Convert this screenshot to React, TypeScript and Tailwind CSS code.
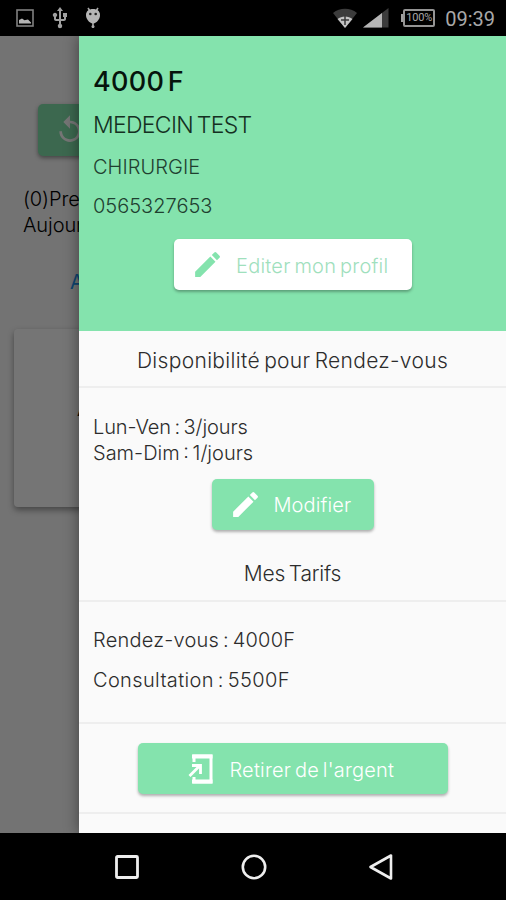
import { ReactNode } from 'react';
import clsx from 'clsx';
import { MdEdit, MdReplay, MdUsb } from 'react-icons/md';

interface ActionButtonProps {
  icon: ReactNode;
  label: string;
  className: string;
  labelClassName: string;
}

function ActionButton({ icon, label, className, labelClassName }: ActionButtonProps) {
  return (
    <button
      className={clsx(
        'flex h-[51px] items-center rounded-[5px] shadow-[0_2px_3px_rgba(0,0,0,0.3)]',
        className
      )}
    >
      {icon}
      <span className={clsx('whitespace-nowrap leading-none [word-spacing:-2px]', labelClassName)}>{label}</span>
    </button>
  );
}

function WithdrawIcon() {
  return (
    <svg className="h-[32px] w-[26px]" viewBox="0 0 26 32" fill="none" stroke="#fff">
      <path d="M6 9V3h17v26H6v-5" strokeWidth="3" />
      <path d="M4 1.500h20.500v4H4zM4 26.500h20.500v4H4z" fill="#fff" stroke="none" />
      <path d="M1.500 23L12 12.500M4 12.500h8.500V21" strokeWidth="2.800" />
    </svg>
  );
}

function StatusBar() {
  return (
    <div className="flex h-9 items-center justify-between bg-black pl-4 pr-[11px] text-[#a8a8a8]">
      <div className="flex items-center">
        <svg className="h-[18px] w-[18px]" viewBox="0 0 18 18">
          <rect x="1" y="1" width="16" height="16" fill="none" stroke="#808080" strokeWidth="1.6" />
          <path d="M3 14.5V11l3-1.6 2.5 1.8 3.5-.6 3 3v.9z" fill="#b5b5b5" />
        </svg>
        <MdUsb className="ml-[14px] h-[24px] w-[24px] text-[#a0a0a0]" />
        <svg className="ml-[13px] h-[24px] w-[16px]" viewBox="0 0 16 24">
          <path d="M3 2l2 3M13 2l-2 3M8 17v5" stroke="#a8a8a8" strokeWidth="1.6" />
          <path d="M1 9c0-4 3-6 7-6s7 2 7 6-3 8-7 8.500C4 17 1 13 1 9z" fill="#b5b5b5" />
          <circle cx="5.300" cy="8" r="1.300" fill="#222" />
          <circle cx="10.700" cy="8" r="1.300" fill="#222" />
          <circle cx="8" cy="20.500" r="1.500" fill="#a8a8a8" />
        </svg>
      </div>
      <div className="flex items-center">
        <svg className="h-[22px] w-[24px]" viewBox="0 0 24 22">
          <path d="M0 6C7 .4 17 .4 24 6L12 21z" fill="#3c3c3c" />
          <path d="M4.500 12c4-3.500 11-3.500 15 0L12 21z" fill="#c4c4c4" />
          <path d="M12 8.500V18M8 13h8" stroke="#3a3a3a" strokeWidth="1.500" />
        </svg>
        <svg className="ml-[6px] h-[20px] w-[26px]" viewBox="0 0 26 20">
          <path d="M25.500 0v19.500H0z" fill="#3c3c3c" />
          <path d="M19 5v14.500H0z" fill="#b5b5b5" />
        </svg>
        <div className="ml-[12px] flex items-center">
          <div className="h-2 w-[2px] bg-[#a0a0a0]" />
          <div className="flex h-[18px] w-[32px] items-center justify-center rounded-[2px] border-2 border-[#949494] font-['Roboto'] text-[11px] tracking-[-0.2px]">
            100%
          </div>
        </div>
        <span className="ml-[10px] mt-[2px] font-['Roboto'] text-[20px] leading-none">09:39</span>
      </div>
    </div>
  );
}

// Only the strip left of the drawer stays visible
function HomeScreen() {
  return (
    <div className="h-full w-[79px] overflow-hidden pt-[68px] text-[20px] font-light text-black">
      <div className="ml-[38px] flex h-[52px] w-[200px] items-center rounded-[5px] bg-[#84e3ad] pl-[16px] shadow-[0_2px_4px_rgba(0,0,0,0.4)]">
        <MdReplay className="h-[32px] w-[32px] text-white" />
      </div>
      <p className="ml-[23px] mt-[30px] whitespace-nowrap leading-[26px] tracking-[-0.1px]">
        (0)Pre
        <br />
        Aujour
      </p>
      <p className="ml-[70px] mt-[31px] font-normal leading-[26px] text-[#2196f3]">A</p>
      <div className="ml-[14px] mt-[34px] h-[178px] w-[470px] rounded-[4px] bg-white pl-[63px] pt-[68px] shadow-[0_3px_6px_rgba(0,0,0,0.4)]">
        <p className="text-[20px] font-medium leading-6">A</p>
      </div>
    </div>
  );
}

function ProfileDrawer() {
  return (
    <aside className="absolute inset-y-0 left-[79px] right-0 flex flex-col bg-[#fafafa] font-light text-[#2c2c2c] shadow-[0_0_14px_rgba(0,0,0,0.45)] [word-spacing:-2px]">
      <header className="flex h-[295px] flex-col bg-[#84e3ad] pl-[14px] pt-[28px]">
        <h1 className="mt-px text-[27px] font-medium leading-[34px] tracking-[0.3px] text-[#06140c] [word-spacing:-4px]">4000 F</h1>
        <p className="mt-[9px] text-[23px] leading-[34px] tracking-[-0.7px] text-[#143022] [word-spacing:-2px]">MEDECIN TEST</p>
        <p className="mt-[10px] text-[20px] leading-[30px] tracking-[0.05px] text-[#1f4030]">CHIRURGIE</p>
        <p className="mt-[9px] text-[20px] leading-[30px] text-[#1f4030]">0565327653</p>
        <ActionButton
          icon={<MdEdit className="h-[33px] w-[33px] text-[#84e3ad]" />}
          label="Editer mon profil"
          className="ml-[81px] mt-[18px] w-[238px] bg-white pl-[17px]"
          labelClassName="ml-[12px] mt-[2px] text-[20px] tracking-[0.23px] text-[#9fe0bd]"
        />
      </header>

      <h2 className="border-b-2 border-[#eeeeee] pb-[10px] pt-[15px] text-center text-[21px] leading-[30px] tracking-[0.32px]">
        Disponibilité pour Rendez-vous
      </h2>
      <div className="pl-[14px] pt-[26px] text-[20px] leading-[26px]">
        <p className="tracking-[-0.1px]">Lun-Ven : 3/jours</p>
        <p>Sam-Dim : 1/jours</p>
      </div>
      <ActionButton
        icon={<MdEdit className="h-[33px] w-[33px] text-white" />}
        label="Modifier"
        className="mt-[13px] w-[162px] self-center bg-[#84e3ad] pl-[17px]"
        labelClassName="ml-[12px] mt-[1px] text-[20px] tracking-[0.1px] text-white"
      />

      <h2 className="mt-[29px] border-b-2 border-[#eeeeee] pb-[11px] text-center text-[21px] leading-[30px] tracking-[-0.2px]">
        Mes Tarifs
      </h2>
      <div className="h-[122px] border-b-2 border-[#eeeeee] pl-[14px] pt-[24px] text-[20px]">
        <p className="leading-[28px] tracking-[0.22px]">Rendez-vous : 4000F</p>
        <p className="mt-[12px] leading-[28px] tracking-[0.35px]">Consultation : 5500F</p>
      </div>

      <div className="flex h-[90px] justify-center border-b-2 border-[#eeeeee] pt-[19px]">
        <ActionButton
          icon={<WithdrawIcon />}
          label="Retirer de l'argent"
          className="w-[310px] bg-[#84e3ad] pl-[50px]"
          labelClassName="ml-[16px] mt-[2px] text-[20px] tracking-[0.2px] text-white"
        />
      </div>
    </aside>
  );
}

function NavigationBar() {
  return (
    <div className="flex h-[67px] items-center justify-center gap-[101px] bg-black pl-[2px]">
      <svg className="h-[26px] w-[26px]" viewBox="0 0 26 26" fill="none" stroke="#eee" strokeWidth="2.800">
        <rect x="2.500" y="2.500" width="21" height="21" rx="1" />
      </svg>
      <svg className="h-[26px] w-[26px]" viewBox="0 0 26 26" fill="none" stroke="#eee" strokeWidth="2.600">
        <circle cx="13" cy="13" r="11.200" />
      </svg>
      <svg className="h-[26px] w-[26px]" viewBox="0 0 26 26" fill="none" stroke="#eee" strokeWidth="2.600" strokeLinejoin="round">
        <path d="M23 1.500v23L2.500 13z" />
      </svg>
    </div>
  );
}

export default function App() {
  return (
    <div className="flex h-[900px] w-[506px] flex-col overflow-hidden bg-black font-['Inter',sans-serif]">
      <StatusBar />
      <main className="relative flex-1 overflow-hidden bg-[#fafafa]">
        <HomeScreen />
        <div className="absolute inset-0 bg-black/54" />
        <ProfileDrawer />
      </main>
      <NavigationBar />
    </div>
  );
}
